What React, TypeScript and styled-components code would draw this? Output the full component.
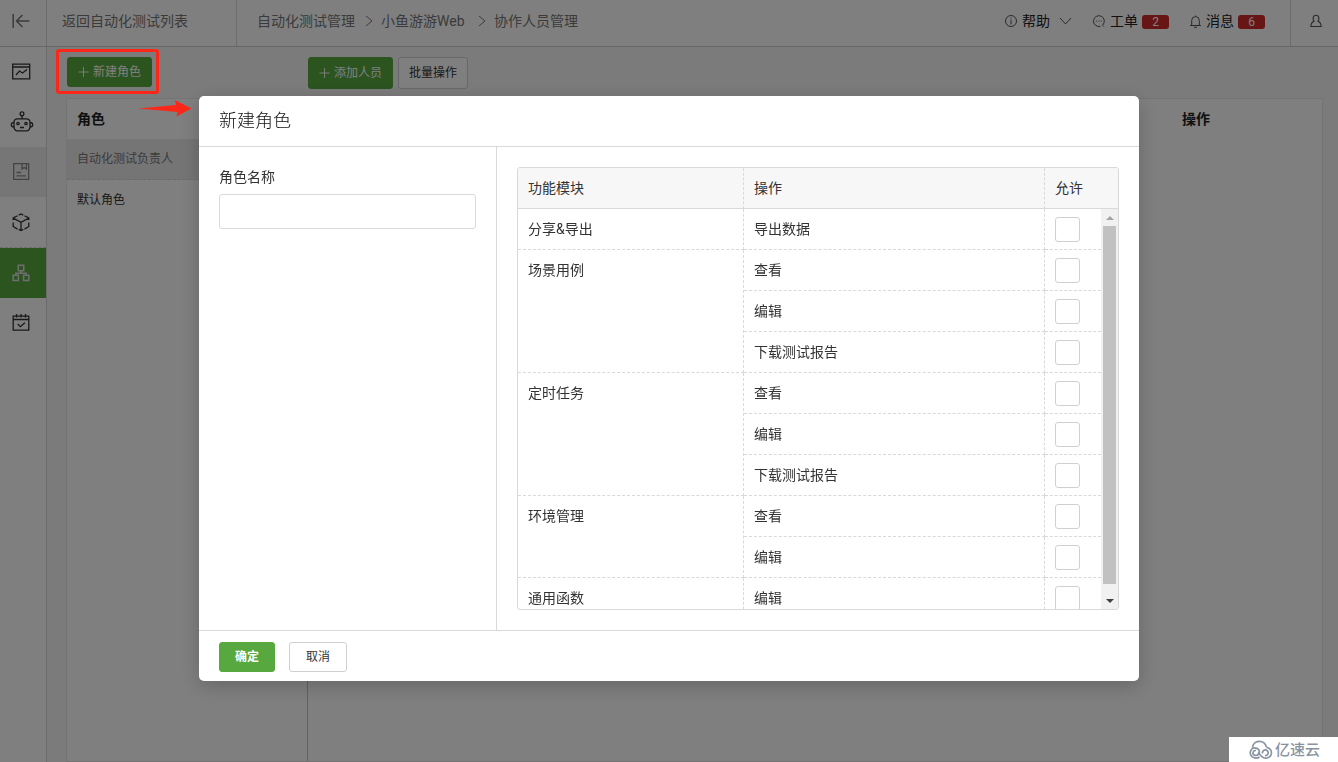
import React from "react";
import styled, { createGlobalStyle, css } from "styled-components";

const GlobalStyle = createGlobalStyle`
  *, *::before, *::after { box-sizing: border-box; }
  body {
    margin: 0;
    background: #f7f7f7;
    color: #333;
    font: 14px/20px Roboto, "Noto Sans CJK SC", sans-serif;
  }
  button, input { font: inherit; color: inherit; }
  a { color: inherit; text-decoration: none; }
  h2, p, ul { margin: 0; padding: 0; list-style: none; }
`;

const line = "#d9d9d9";
const green = "#56a83f";

const Page = styled.div`
  position: relative;
  display: flex;
  flex-direction: column;
  min-height: 100vh;
`;

/* ---------- top bar ---------- */
const TopBar = styled.header`
  display: flex;
  align-items: stretch;
  height: 47px;
  background: #fff;
  border-bottom: 1px solid #ccc;
  color: #777;
`;

const BackButton = styled.button`
  display: flex;
  align-items: center;
  width: 47px;
  padding: 0 0 4px 12px;
  border: 0;
  border-right: 1px solid ${line};
  background: none;
`;

const BackLink = styled.a`
  width: 190px;
  padding: 11px 15px;
  border-right: 1px solid ${line};
`;

const Breadcrumb = styled.nav`
  display: flex;
  align-items: center;
  flex: 1;
  padding: 0 20px 4px;
`;

const Crumb = styled.a`
  display: flex;
  align-items: center;
  white-space: pre;
`;

const CrumbArrow = styled.svg`
  width: 8px;
  height: 12px;
  margin: 0 8px 0 10px;
`;

const Tools = styled.div`
  display: flex;
  align-items: center;
  gap: 21px;
  padding: 0 25px 4px 0;
  color: #222;
`;

const Tool = styled.a`
  display: flex;
  align-items: center;
  svg { color: #555; }
`;

const ToolLabel = styled.span`
  margin: 0 4px 0 5px;
`;

const Badge = styled.span`
  width: 27px;
  height: 14px;
  margin-top: 2px;
  border-radius: 3px;
  background: #d02a2d;
  color: #fff;
  font: 12px/14px Roboto, sans-serif;
  text-align: center;
`;

const UserButton = styled.button`
  display: flex;
  align-items: center;
  width: 48px;
  padding: 0 0 4px 19px;
  border: 0;
  border-left: 1px solid ${line};
  background: none;
  color: #555;
`;

/* ---------- side bar ---------- */
const Shell = styled.div`
  display: flex;
  flex: 1;
`;

const SideBar = styled.nav`
  width: 47px;
  background: #fff;
  border-right: 1px solid ${line};
`;

const SideItem = styled.a<{ $tone?: "active" | "muted"; $ruled?: boolean }>`
  display: flex;
  align-items: center;
  height: ${(p) => (p.$ruled ? 51 : 50)}px;
  padding-left: 10px;
  border-bottom: ${(p) => (p.$ruled ? `1px dashed ${line}` : "0")};
  ${(p) => p.$tone === "active" && css`background: ${green}; color: #ddd;`}
  ${(p) => p.$tone === "muted" && css`background: #ededed; color: #888;`}
`;

/* ---------- page content ---------- */
const Content = styled.main`
  display: flex;
  flex: 1;
  flex-direction: column;
  padding: 10px 15px 0 19px;
`;

const Actions = styled.div`
  display: flex;
  align-items: flex-start;
  gap: 5px;
  height: 41px;
  padding-left: 1px;
`;

const ActionSlot = styled.div`
  width: 236px;
`;

const Button = styled.button<{ $primary?: boolean; $tall?: boolean; $bold?: boolean }>`
  display: inline-flex;
  align-items: center;
  justify-content: center;
  gap: 4px;
  height: ${(p) => (p.$tall ? 32 : 30)}px;
  padding: 0 10px;
  border: 1px solid ${(p) => (p.$primary ? green : "#d0d0d0")};
  border-radius: 3px;
  background: ${(p) => (p.$primary ? green : "#fff")};
  color: ${(p) => (p.$primary ? "#fff" : "#333")};
  font-size: 12px;
  font-weight: ${(p) => (p.$bold ? 700 : 400)};
  white-space: nowrap;
`;

const AddButton = styled(Button)`
  width: 85px;
`;

const DialogButton = styled(Button)<{ $wide?: boolean }>`
  width: ${(p) => (p.$wide ? 58 : 56)}px;
`;

const Card = styled.section`
  display: flex;
  flex: 1;
  border: 1px solid #e8e8e8;
  background: #fff;
`;

const RoleColumn = styled.div`
  width: 241px;
  border-right: 1px solid #c4c4c4;
`;

const PeopleColumn = styled.div`
  display: flex;
  flex: 1;
  justify-content: flex-end;
`;

const ColumnTitle = styled.p`
  padding: 10px;
  font-weight: 700;
  color: #222;
`;

const OperationTitle = styled(ColumnTitle)`
  width: 150px;
`;

const RoleItem = styled.li<{ $selected?: boolean }>`
  padding: 10px;
  border-bottom: 1px dashed ${(p) => (p.$selected ? line : "transparent")};
  background: ${(p) => (p.$selected ? "#eaeaea" : "none")};
  color: ${(p) => (p.$selected ? "#777" : "#333")};
  font-size: 12px;
`;

/* ---------- dialog ---------- */
const Backdrop = styled.div`
  position: fixed;
  inset: 0;
  display: flex;
  align-items: flex-start;
  justify-content: center;
  padding: 96px 20px 20px;
  background: rgba(0, 0, 0, 0.5);
`;

const Dialog = styled.form`
  flex: 1;
  max-width: 940px;
  border-radius: 5px;
  background: #fff;
  box-shadow: 0 5px 20px rgba(0, 0, 0, 0.2);
`;

const DialogTitle = styled.h2`
  padding: 13px 20px;
  border-bottom: 1px solid ${line};
  color: #111;
  font-size: 18px;
  line-height: 24px;
  font-weight: 300;
`;

const DialogBody = styled.div`
  display: flex;
`;

const NamePane = styled.div`
  width: 298px;
  padding: 20px;
  border-right: 1px solid ${line};
`;

const NameLabel = styled.label`
  display: block;
`;

const NameInput = styled.input`
  display: block;
  width: 100%;
  height: 35px;
  margin-top: 7px;
  padding: 0 10px;
  border: 1px solid ${line};
  border-radius: 3px;
`;

const RightsPane = styled.div`
  flex: 1;
  padding: 20px;
`;

const RightsBox = styled.div`
  border: 1px solid ${line};
  border-radius: 3px;
  overflow: hidden;
`;

const RightsTable = styled.table`
  width: 100%;
  table-layout: fixed;
  border-collapse: separate;
  border-spacing: 0;
`;

const ModuleCol = styled.col`
  width: 226px;
`;

const ActionCol = styled.col`
  width: 301px;
`;

const HeadCell = styled.th`
  padding: 10px;
  border-bottom: 1px solid ${line};
  background: #f7f7f7;
  font-weight: 400;
  text-align: left;
  &:not(:last-child) { border-right: 1px dashed ${line}; }
`;

const Cell = styled.td`
  padding: 10px;
  border-right: 1px dashed ${line};
  border-bottom: 1px dashed ${line};
  vertical-align: top;
`;

const TickCell = styled.td`
  padding: 8px 10px 7px;
  border-bottom: 1px dashed ${line};
`;

const Tick = styled.input`
  appearance: none;
  display: block;
  width: 25px;
  height: 25px;
  margin: 0;
  border: 1px solid #d0d0d0;
  border-radius: 3px;
  background: #fff;
  &:checked { background: ${green}; }
`;

const ScrollArea = styled.div`
  display: flex;
  height: 400px;
`;

const ScrollView = styled.div`
  flex: 1;
  overflow-y: auto;
  scrollbar-width: none;
`;

const ScrollBar = styled.div`
  display: flex;
  flex-direction: column;
  width: 17px;
  background: #f1f1f1;
`;

const ScrollStep = styled.button`
  display: flex;
  align-items: center;
  justify-content: center;
  height: 17px;
  padding: 0;
  border: 0;
  background: none;
`;

const ScrollTrack = styled.div`
  flex: 1;
  padding: 0 2px 8px;
`;

const ScrollThumb = styled.div`
  height: 100%;
  background: #c1c1c1;
`;

const DialogFooter = styled.footer`
  display: flex;
  gap: 14px;
  padding: 11px 20px 9px;
  border-top: 1px solid ${line};
`;

/* ---------- marks over the page ---------- */
const Highlight = styled.div`
  position: absolute;
  top: 49px;
  left: 56px;
  width: 103px;
  height: 45px;
  border: 3px solid #fb2819;
  border-radius: 3px;
`;

const Pointer = styled.svg`
  position: absolute;
  top: 99px;
  left: 137px;
`;

const Watermark = styled.div`
  position: fixed;
  right: 0;
  bottom: 0;
  display: flex;
  align-items: center;
  gap: 2px;
  width: 109px;
  height: 25px;
  padding-left: 18px;
  background: #fff;
  color: #8a93a0;
  font-size: 15px;
  font-weight: 500;
`;

type IconProps = { w?: number; h?: number; box?: string; stroke?: number; children: React.ReactNode };
const Icon = ({ w = 24, h = 24, box = `0 0 ${w} ${h}`, stroke = 1.3, children }: IconProps) => (
  <svg width={w} height={h} viewBox={box} fill="none" stroke="currentColor" strokeWidth={stroke} aria-hidden="true">
    {children}
  </svg>
);

const Plus = () => (
  <Icon w={12} h={12} stroke={1}>
    <path d="M6 .5v11M.5 6h11" />
  </Icon>
);

const modules = [
  { name: "分享&导出", actions: ["导出数据"] },
  { name: "场景用例", actions: ["查看", "编辑", "下载测试报告"] },
  { name: "定时任务", actions: ["查看", "编辑", "下载测试报告"] },
  { name: "环境管理", actions: ["查看", "编辑"] },
  { name: "通用函数", actions: ["编辑"] },
];

const Columns = () => (
  <colgroup>
    <ModuleCol />
    <ActionCol />
    <col />
  </colgroup>
);

const Header = () => (
  <TopBar>
    <BackButton aria-label="返回">
      <Icon w={18} h={18} stroke={1.5}>
        <path d="M1.2 2v14M17.5 9H4.5M10.5 3L4.5 9l6 6" />
      </Icon>
    </BackButton>
    <BackLink href="#list">返回自动化测试列表</BackLink>
    <Breadcrumb>
      {["自动化测试管理", "小鱼游游Web ", "协作人员管理"].map((text, i) => (
        <Crumb href="#" key={text}>
          {i > 0 && (
            <CrumbArrow viewBox="0 0 8 12" fill="none" stroke="currentColor">
              <path d="M1 1L7 6 1 11" />
            </CrumbArrow>
          )}
          {text}
        </Crumb>
      ))}
    </Breadcrumb>
    <Tools>
      <Tool href="#help">
        <Icon w={12} h={12} stroke={1}>
          <circle cx="6" cy="6" r="5.5" />
          <path d="M6 2.6v1.2M6 4.8v4.6" />
        </Icon>
        <ToolLabel>帮助</ToolLabel>
        <Icon w={18} h={12} stroke={1}>
          <path d="M6 3l5.500 6L17 3" />
        </Icon>
      </Tool>
      <Tool href="#orders">
        <Icon w={12} h={12} stroke={1}>
          <path d="M9.700 10A5.400 5.400 0 1 0 7.500 11.300M9.500 10.100l1.200 1.400" />
          <path d="M3.200 6h1M5.500 6h1M7.800 6h1" />
        </Icon>
        <ToolLabel>工单</ToolLabel>
        <Badge>2</Badge>
      </Tool>
      <Tool href="#messages">
        <Icon w={11} h={13} stroke={1}>
          <path d="M5.500 .5v1M1.700 10V5.400a3.800 3.800 0 0 1 7.600 0V10M0 10.500h11M4 12.300h3" />
        </Icon>
        <ToolLabel>消息</ToolLabel>
        <Badge>6</Badge>
      </Tool>
    </Tools>
    <UserButton aria-label="用户">
      <Icon w={12} h={14} stroke={1.1}>
        <path d="M4 7.200C2.600 5.800 2.500 1.200 6 1.200S9.400 5.800 8 7.200c2 .8 3 2.300 3.200 5.300H.8C1 9.500 2 8 4 7.200z" />
      </Icon>
    </UserButton>
  </TopBar>
);

const Side = () => (
  <SideBar>
    <SideItem href="#overview" aria-label="概览">
      <Icon>
        <path d="M2.700 4.200h17v14.600h-17zM2.700 7h17M6 15l3.500-4 3 2L17 9.500" />
      </Icon>
    </SideItem>
    <SideItem href="#robot" aria-label="机器人">
      <Icon>
        <circle cx="12" cy="3.700" r="1.900" />
        <path d="M12 5.600v3.200M7.500 8.800h9a3.500 3.500 0 0 1 3.500 3.500v5a3.500 3.500 0 0 1-3.500 3.500h-9A3.500 3.500 0 0 1 4 17.300v-5a3.500 3.500 0 0 1 3.500-3.500zM4 12.500c-2 0-2.700.8-2.700 2.300S2 17 4 17M20 12.500c2 0 2.700.8 2.700 2.300S22 17 20 17M10 17.500h4" />
        <circle cx="8" cy="13.500" r="1.200" />
        <circle cx="16" cy="13.500" r="1.200" />
      </Icon>
    </SideItem>
    <SideItem href="#reports" aria-label="报告" $tone="muted">
      <Icon>
        <path d="M3.700 3.700h15v15.600h-15zM12 3.700v5.300l2.200-1.500 2.200 1.500V3.700M6.500 12.500h4.500M6.500 15.800h9.500" />
      </Icon>
    </SideItem>
    <SideItem href="#packages" aria-label="资源" $ruled>
      <Icon>
        <path d="M7.500 5.700L3.200 8v2M14.500 5.700L18.800 8v2M3.200 12.500v4l4.300 2.600M18.800 12.500v4l-4.300 2.600M8.700 5.100L11 3.900l2.300 1.200M8.700 19.300L11 20.500l2.300-1.200M3.200 8.200L11 12.300l7.800-4.100M11 12.300v8" />
      </Icon>
    </SideItem>
    <SideItem href="#members" aria-label="协作人员" $tone="active">
      <Icon stroke={1.5}>
        <path d="M8.300 4.300h5.400v5.400H8.300zM3.200 14.300h5.200v5.200H3.200zM13.600 14.300h5.200v5.200h-5.200zM11 9.700v2.500M5.800 14.300v-2.100h10.400v2.100" />
      </Icon>
    </SideItem>
    <SideItem href="#schedule" aria-label="定时任务">
      <Icon>
        <path d="M3.200 5.200h15.600v14H3.200zM3.200 8.500h15.600M6.500 3v3.500M11 3v3.500M15.500 3v3.500M7.700 13l2.700 2.700 4.500-4" />
      </Icon>
    </SideItem>
  </SideBar>
);

const Rights = () => (
  <RightsBox>
    <RightsTable>
      <Columns />
      <thead>
        <tr>
          <HeadCell>功能模块</HeadCell>
          <HeadCell>操作</HeadCell>
          <HeadCell>允许</HeadCell>
        </tr>
      </thead>
    </RightsTable>
    <ScrollArea>
      <ScrollView>
        <RightsTable>
          <Columns />
          <tbody>
            {modules.map((m) =>
              m.actions.map((action, i) => (
                <tr key={m.name + action}>
                  {i === 0 && <Cell rowSpan={m.actions.length}>{m.name}</Cell>}
                  <Cell>{action}</Cell>
                  <TickCell>
                    <Tick type="checkbox" aria-label={`${m.name} ${action}`} />
                  </TickCell>
                </tr>
              ))
            )}
          </tbody>
        </RightsTable>
      </ScrollView>
      <ScrollBar>
        <ScrollStep type="button" aria-label="向上滚动">
          <svg width="8" height="4" viewBox="0 0 8 4"><path d="M0 4l4-4 4 4z" fill="#a3a3a3" /></svg>
        </ScrollStep>
        <ScrollTrack>
          <ScrollThumb />
        </ScrollTrack>
        <ScrollStep type="button" aria-label="向下滚动">
          <svg width="8" height="4" viewBox="0 0 8 4"><path d="M0 0l4 4 4-4z" fill="#404040" /></svg>
        </ScrollStep>
      </ScrollBar>
    </ScrollArea>
  </RightsBox>
);

export default function App() {
  return (
    <>
      <GlobalStyle />
      <Page>
        <Header />
        <Shell>
          <Side />
          <Content>
            <Actions>
              <ActionSlot>
                <AddButton $primary><Plus />新建角色</AddButton>
              </ActionSlot>
              <AddButton $primary $tall><Plus />添加人员</AddButton>
              <Button $tall>批量操作</Button>
            </Actions>
            <Card>
              <RoleColumn>
                <ColumnTitle>角色</ColumnTitle>
                <ul>
                  <RoleItem $selected>自动化测试负责人</RoleItem>
                  <RoleItem>默认角色</RoleItem>
                </ul>
              </RoleColumn>
              <PeopleColumn>
                <OperationTitle>操作</OperationTitle>
              </PeopleColumn>
            </Card>
          </Content>
        </Shell>
        <Backdrop>
          <Dialog role="dialog" aria-labelledby="dialog-title" onSubmit={(e) => e.preventDefault()}>
            <DialogTitle id="dialog-title">新建角色</DialogTitle>
            <DialogBody>
              <NamePane>
                <NameLabel htmlFor="role-name">角色名称</NameLabel>
                <NameInput id="role-name" type="text" />
              </NamePane>
              <RightsPane>
                <Rights />
              </RightsPane>
            </DialogBody>
            <DialogFooter>
              <DialogButton type="submit" $primary $bold>确定</DialogButton>
              <DialogButton type="button" $wide>取消</DialogButton>
            </DialogFooter>
          </Dialog>
        </Backdrop>
        <Highlight />
        <Pointer width="55" height="18" viewBox="0 0 55 18" aria-hidden="true">
          <path d="M1 9.500L39 6l-1-5 16.500 8.500L39.500 17.500l1-4.500z" fill="#fb2819" />
        </Pointer>
        <Watermark>
          <Icon w={26} h={20} stroke={1.7}>
            <path d="M5.500 7.800C6-.5 17.500-1 19.500 7.300" />
            <path d="M12.500 17A5.800 5.300 0 1 1 7 7.800c5 0 6.500 3.200 4.500 5.700a2.800 2.500 0 1 1-2.500-3" />
            <path d="M19.500 7.300a5.400 5.400 0 1 1-1 10.900c-3 0-4.500-2.500-6.500-5M15.500 13.500a2.900 2.900 0 1 1 2.500 2.200" />
          </Icon>
          <span>亿速云</span>
        </Watermark>
      </Page>
    </>
  );
}
